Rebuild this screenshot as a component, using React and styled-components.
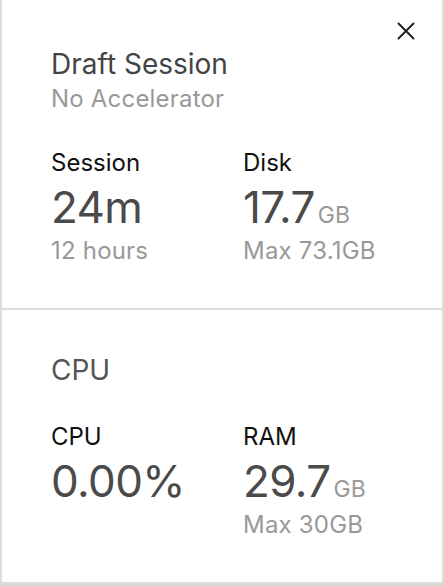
import React from "react";
import styled, { createGlobalStyle } from "styled-components";

const GlobalStyle = createGlobalStyle`
  html, body {
    margin: 0;
    padding: 0;
    background: #d8d8d8;
    font-family: Inter, "Noto Sans", "Liberation Sans", sans-serif;
    -webkit-font-smoothing: antialiased;
  }
`;

const App = () => {
  return (
    <>
      <GlobalStyle />
      <PanelStyled>
        <CardStyled height={308} top={48}>
          <CloseButton aria-label="Close">
            <svg width="18" height="18" viewBox="0 0 18 18">
              <path
                d="M1.5 1.5 L16.5 16.5 M16.5 1.5 L1.5 16.5"
                stroke="#222"
                strokeWidth="2"
                strokeLinecap="round"
              />
            </svg>
          </CloseButton>
          <Title>Draft Session</Title>
          <Subtitle>No Accelerator</Subtitle>
          <StatsGrid gap={34}>
            <Stat>
              <Label>Session</Label>
              <Value>24m</Value>
              <Note>12 hours</Note>
            </Stat>
            <Stat>
              <Label>Disk</Label>
              <Value>
                17.7<Unit>GB</Unit>
              </Value>
              <Note>Max 73.1GB</Note>
            </Stat>
          </StatsGrid>
        </CardStyled>
        <CardStyled height={272} top={44}>
          <Heading>CPU</Heading>
          <StatsGrid gap={36}>
            <Stat>
              <Label>CPU</Label>
              <Value>0.00%</Value>
            </Stat>
            <Stat>
              <Label>RAM</Label>
              <Value>
                29.7<Unit>GB</Unit>
              </Value>
              <Note>Max 30GB</Note>
            </Stat>
          </StatsGrid>
        </CardStyled>
      </PanelStyled>
    </>
  );
};

// Styled components
const PanelStyled = styled.div`
  width: 444px;
  display: flex;
  flex-direction: column;
  gap: 2px;
  background: #dcdcdc;
  border-bottom: 2px solid #dcdcdc;
  box-sizing: border-box;
`;

const CardStyled = styled.div`
  position: relative;
  height: ${(p) => p.height}px;
  margin: 0 2px;
  padding: ${(p) => p.top}px 49px 0;
  background: #fff;
  box-sizing: border-box;
`;

const CloseButton = styled.button`
  position: absolute;
  top: 22px;
  right: 27px;
  padding: 0;
  border: none;
  background: none;
  display: flex;
`;

const Title = styled.h2`
  margin: 0;
  font-size: 28px;
  font-weight: 400;
  line-height: 32px;
  color: #444;
`;

const Heading = styled(Title)`
  color: #555;
`;

const Subtitle = styled.div`
  margin-top: 4px;
  font-size: 24px;
  line-height: 30px;
  letter-spacing: 0.2px;
  color: #999;
`;

const StatsGrid = styled.div`
  display: grid;
  grid-template-columns: 192px 1fr;
  margin-top: ${(p) => p.gap}px;
`;

const Stat = styled.div`
  display: flex;
  flex-direction: column;
`;

const Label = styled.div`
  font-size: 24px;
  line-height: 30px;
  color: #111;
`;

const Value = styled.div`
  font-size: 44px;
  line-height: 58px;
  letter-spacing: -0.6px;
  color: #4a4a4a;
`;

const Unit = styled.span`
  margin-left: 3px;
  font-size: 23px;
  line-height: 1;
  letter-spacing: 0;
  color: #999;
`;

const Note = styled.div`
  font-size: 24px;
  line-height: 30px;
  letter-spacing: 0.2px;
  color: #999;
`;

export default App;
